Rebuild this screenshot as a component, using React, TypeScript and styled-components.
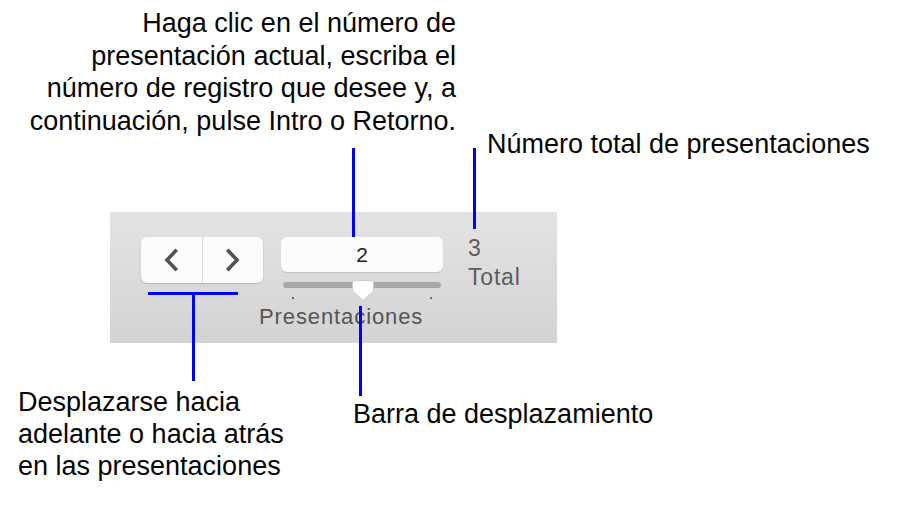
import React from "react";
import styled, { createGlobalStyle } from "styled-components";

const Global = createGlobalStyle`
  html, body {
    margin: 0;
    padding: 0;
    background: #ffffff;
  }
  body {
    font-family: "Liberation Sans", Arial, Helvetica, sans-serif;
    -webkit-font-smoothing: antialiased;
  }
`;

const Canvas = styled.div`
  position: relative;
  width: 920px;
  height: 521px;
  overflow: hidden;
  background: #ffffff;
  display: flex;
  flex-direction: column;
  align-items: flex-start;
`;

/* ---------- callout text ---------- */

const Note = styled.div`
  font-size: 27px;
  line-height: 32px;
  color: #050505;
  white-space: nowrap;
`;

const TopRow = styled.div`
  height: 212px;
  display: flex;
  align-items: flex-start;
`;

const FieldNote = styled(Note)`
  width: 456px;
  margin-top: 7px;
  line-height: 32.5px;
  text-align: right;
`;

const TotalNote = styled(Note)`
  margin: 128px 0 0 31px;
`;

const BottomRow = styled.div`
  display: flex;
  align-items: flex-start;
  padding-left: 18px;
`;

const NavNote = styled(Note)`
  width: 335px;
  margin-top: 43px;
`;

const SliderNote = styled(Note)`
  margin-top: 55px;
`;

/* blue leader lines drawn over the diagram */
const Leader = styled.span<{ $x: number; $y: number; $w: number; $h: number }>`
  position: absolute;
  left: ${(p) => p.$x}px;
  top: ${(p) => p.$y}px;
  width: ${(p) => p.$w}px;
  height: ${(p) => p.$h}px;
  background: #0000ff;
`;

/* ---------- the toolbar strip being explained ---------- */

const Toolbar = styled.div`
  margin-left: 110px;
  width: 447px;
  height: 131px;
  box-sizing: border-box;
  padding: 25px 0 0 31px;
  background: linear-gradient(#e3e3e4, #d3d3d3);
  display: flex;
  align-items: flex-start;
  gap: 18px;
`;

const NavGroup = styled.div`
  width: 122px;
  height: 46px;
  border-radius: 6px;
  background: #fbfbfb;
  box-shadow: 0 1px 1.5px rgba(0, 0, 0, 0.18);
  display: flex;
`;

const NavButton = styled.div<{ $divider?: boolean }>`
  flex: 1;
  display: flex;
  align-items: center;
  justify-content: center;
  border-left: ${(p) => (p.$divider ? "1px solid #dedede" : "none")};
`;

const Chevron = styled.svg`
  width: 16px;
  height: 24px;
  display: block;
`;

const FieldColumn = styled.div`
  width: 162px;
  display: flex;
  flex-direction: column;
  align-items: stretch;
`;

const NumberField = styled.div`
  height: 35px;
  border-radius: 6px;
  background: #fcfcfc;
  box-shadow: 0 1px 1px rgba(0, 0, 0, 0.12);
  display: flex;
  align-items: center;
  justify-content: center;
  font-size: 21px;
  color: #1e1e1e;
`;

const Slider = styled.div`
  position: relative;
  margin-top: 8px;
  height: 20px;
`;

const Track = styled.div`
  margin: 2px 2px 0;
  height: 6px;
  border-radius: 3px;
  background: #a8a8a8;
`;

const Thumb = styled.svg`
  position: absolute;
  left: 71px;
  top: 0;
  width: 22px;
  height: 21px;
`;

const Tick = styled.span<{ $left: number }>`
  position: absolute;
  top: 17px;
  left: ${(p) => p.$left}px;
  width: 2px;
  height: 2px;
  background: #6a6a6a;
`;

const SliderLabel = styled.div`
  margin: 5px 0 0 -22px;
  align-self: flex-start;
  font-size: 22px;
  line-height: 24px;
  letter-spacing: 0.9px;
  color: #555555;
  white-space: nowrap;
`;

const TotalBlock = styled.div`
  margin: -3px 0 0 7px;
  font-size: 23px;
  line-height: 29px;
  letter-spacing: 0.8px;
  color: #5c5c5c;
`;

function ChevronIcon({ dir }: { dir: "left" | "right" }) {
  const points = dir === "left" ? "12.5,3 4,12 12.5,21" : "3.5,3 12,12 3.5,21";
  return (
    <Chevron viewBox="0 0 16 24">
      <polyline
        points={points}
        fill="none"
        stroke="#525252"
        strokeWidth="3.6"
        strokeLinecap="square"
        strokeLinejoin="miter"
      />
    </Chevron>
  );
}

export default function App() {
  return (
    <>
      <Global />
      <Canvas>
        <TopRow>
          <FieldNote>
            Haga clic en el número de
            <br />
            presentación actual, escriba el
            <br />
            número de registro que desee y, a
            <br />
            continuación, pulse Intro o Retorno.
          </FieldNote>
          <TotalNote>Número total de presentaciones</TotalNote>
        </TopRow>

        <Toolbar>
          <NavGroup>
            <NavButton>
              <ChevronIcon dir="left" />
            </NavButton>
            <NavButton $divider>
              <ChevronIcon dir="right" />
            </NavButton>
          </NavGroup>

          <FieldColumn>
            <NumberField>2</NumberField>
            <Slider>
              <Track />
              <Tick $left={11} />
              <Tick $left={149} />
              <Thumb viewBox="0 0 22 21">
                <path
                  d="M3 0.5 H19 Q21.5 0.5 21.5 3 V11 L11 20.5 L0.5 11 V3 Q0.5 0.5 3 0.5 Z"
                  fill="#ffffff"
                  stroke="#c4c4c4"
                  strokeWidth="0.8"
                />
              </Thumb>
            </Slider>
            <SliderLabel>Presentaciones</SliderLabel>
          </FieldColumn>

          <TotalBlock>
            3
            <br />
            Total
          </TotalBlock>
        </Toolbar>

        <BottomRow>
          <NavNote>
            Desplazarse hacia
            <br />
            adelante o hacia atrás
            <br />
            en las presentaciones
          </NavNote>
          <SliderNote>Barra de desplazamiento</SliderNote>
        </BottomRow>

        <Leader $x={352} $y={148} $w={3} $h={89} />
        <Leader $x={473} $y={148} $w={3} $h={81} />
        <Leader $x={148} $y={292} $w={90} $h={3} />
        <Leader $x={192} $y={292} $w={3} $h={89} />
        <Leader $x={359} $y={306} $w={3} $h={90} />
      </Canvas>
    </>
  );
}
